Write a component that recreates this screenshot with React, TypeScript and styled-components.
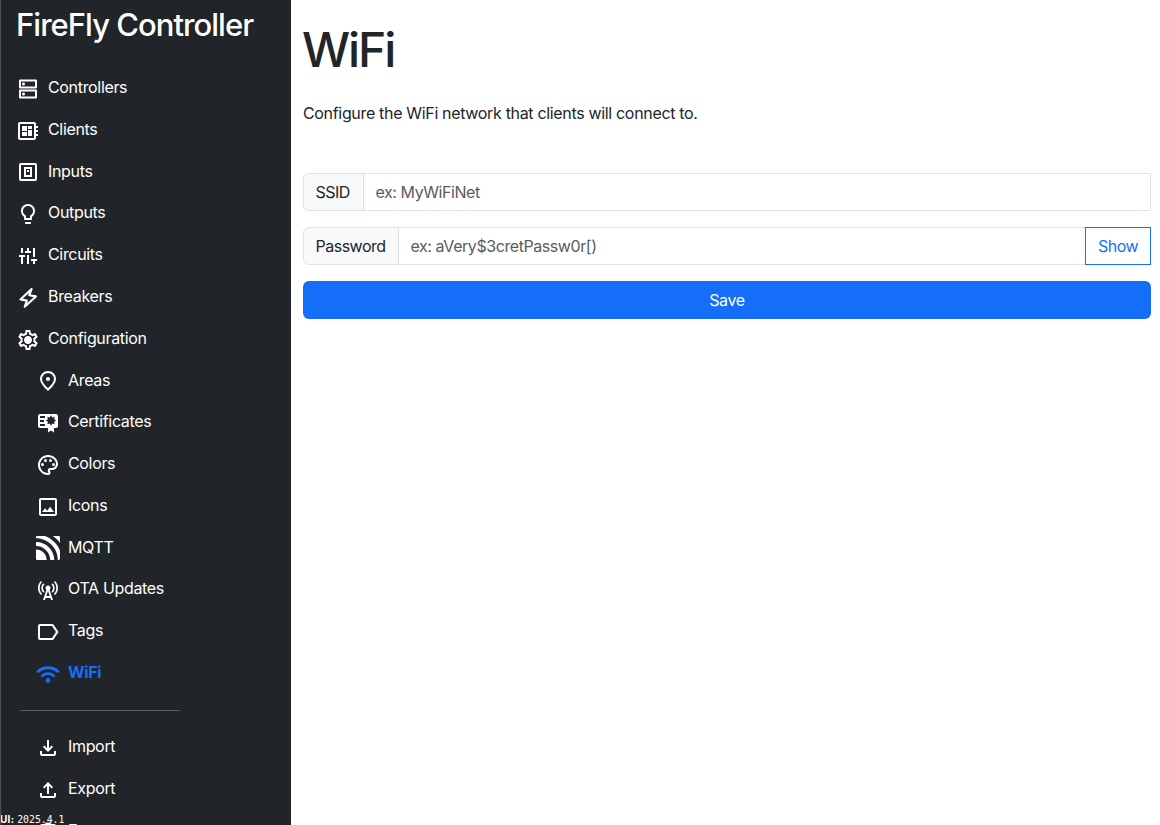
import React, { ReactNode } from "react";
import styled, { createGlobalStyle } from "styled-components";
import {
  MdOutlineDeveloperBoard, MdLightbulbOutline,
  MdOutlinePalette, MdOutlineImage, MdOutlineCellTower,
  MdOutlineFileDownload, MdOutlineFileUpload, MdOutlineSettings,
} from "react-icons/md";
import { SiMqtt } from "react-icons/si";

const Global = createGlobalStyle`
  *, *::before, *::after { box-sizing: border-box; }
  body {
    margin: 0; height: 825px; overflow: hidden; background: #fff; color: #212529;
    font: 400 16px/24px Inter, "Liberation Sans", sans-serif; letter-spacing: -0.33px;
  }
`;
const Page = styled.div`display: flex; height: 825px; overflow: hidden;`;
const Sidebar = styled.nav`
  position: relative; width: 291px; flex: none; overflow: hidden; color: #fff;
  background: #212529; border-left: 1px solid #495057;
`;
const Brand = styled.div`
  margin: 6px 0 0 15px; height: 38px; font-size: 31px; line-height: 38px;
  font-weight: 550; letter-spacing: -0.97px; white-space: nowrap;
`;
const Menu = styled.div`padding: 23.8px 0 0 15px;`;
const Item = styled.a<{ $sub?: boolean; $active?: boolean }>`
  display: flex; align-items: center; height: 41.78px; gap: 8px;
  margin-left: ${p => (p.$sub ? 20 : 0)}px;
  color: ${p => (p.$active ? "#146ef9" : "#fff")};
  font-weight: ${p => (p.$active ? 700 : 400)};
  svg { width: 24px; height: 24px; flex: none; display: block; }
`;
const IconSlot = styled.span`position: relative; display: flex; flex: none; padding-top: 0.5px;`;
const Label = styled.span`padding-bottom: 3px; white-space: nowrap;`;
const Divider = styled.hr`
  width: 160px; height: 1px; margin: 16.2px 0 15.6px 4px; border: 0; background: #5c5f62;
`;
const Version = styled.div`
  position: absolute; left: -1px; bottom: -1px; height: 13px; font-size: 10px; line-height: 13px;
  letter-spacing: 0; white-space: nowrap;
  b { font-weight: 700; letter-spacing: 0.3px; }
  span { font-family: "DejaVu Sans Mono", monospace; font-size: 9.8px; }
`;
const Main = styled.main`flex: 1; padding: 20px 9px 0 12px;`;
const Heading = styled.h1`margin: 0 0 0 -1px; font-size: 48px; line-height: 60px; font-weight: 550; letter-spacing: -2.1px;`;
const Intro = styled.p`margin: 21px 0 48px;`;
const Group = styled.div`display: flex; height: 38px; margin-bottom: 16px; letter-spacing: -0.5px;`;
const Prefix = styled.label<{ $w: number }>`
  width: ${p => p.$w}px; flex: none; padding: 6px 11.5px; background: #f8f9fa;
  border: 1px solid #dee2e6; border-radius: 6px 0 0 6px; white-space: nowrap;
`;
const Field = styled.input`
  flex: 1; min-width: 0; margin-left: -1px; padding: 6px 11.5px; font: inherit; letter-spacing: -0.43px;
  color: #212529; background: #fff; border: 1px solid #dee2e6; border-radius: 0; outline: 0;
  &::placeholder { color: #595c5f; opacity: 1; }
`;
const ShowButton = styled.button`
  width: 66px; margin-left: -1px; padding: 0; font: inherit; letter-spacing: inherit;
  color: #146ef9; background: #fff; border: 1px solid #146ef9;
`;
const SaveButton = styled.button`
  display: block; width: 100%; height: 38px; padding: 0; font: inherit; letter-spacing: inherit;
  color: #fff; background: #146ef9; border: 0; border-radius: 6px;
`;

const Glyph = ({ d }: { d: string }) => (
  <svg viewBox="0 0 24 24" fill="currentColor" fillRule="evenodd"><path d={d} /></svg>
);
const server = "M4 2.5h16a1 1 0 0 1 1 1v7a1 1 0 0 1-1 1H4a1 1 0 0 1-1-1v-7a1 1 0 0 1 1-1zM5 4.5v5h14v-5zM4 12.5h16a1 1 0 0 1 1 1v7a1 1 0 0 1-1 1H4a1 1 0 0 1-1-1v-7a1 1 0 0 1 1-1zM5 14.5v5h14v-5zM7.5 5.5a1.5 1.5 0 1 1 0 3 1.5 1.5 0 0 1 0-3zM7.5 15.5a1.5 1.5 0 1 1 0 3 1.5 1.5 0 0 1 0-3z";
const inputs = "M5 3h14a2 2 0 0 1 2 2v14a2 2 0 0 1-2 2H5a2 2 0 0 1-2-2V5a2 2 0 0 1 2-2zM5 5v14h14V5zM8 7h8v10H8zM10 9v6h4V9zM11 10h2v2h-2z";
const mixer = "M5 20v-7H3v-2h6v2H7v7zM5 9V4h2v5zM9 9V7h2V4h2v3h2v2zM11 20V11h2v9zM17 20v-3h-2v-2h6v2h-2v3zM17 13V4h2v9z";
const pin = "M12 2a8 8 0 0 1 8 8c0 5-8 12-8 12S4 15 4 10a8 8 0 0 1 8-8zM12 4a6 6 0 0 0-6 6c0 3 3.6 7 6 9.3C14.4 17 18 13 18 10a6 6 0 0 0-6-6zM12 8a2 2 0 1 1 0 4 2 2 0 0 1 0-4z";
const certificate = "M4 3h16a2 2 0 0 1 2 2v10a2 2 0 0 1-2 2h-2v4.5l-3-2-3 2V17H4a2 2 0 0 1-2-2V5a2 2 0 0 1 2-2zM4 5v2h5V5zM4 9v2h4V9zM4 13v2h5v-2zM20.2 9.5L18.1 8.2 18.7 5.8 16.3 6.4 15 4.3 13.7 6.4 11.3 5.8 11.9 8.2 9.8 9.5 11.9 10.8 11.3 13.2 13.7 12.6 15 14.7 16.3 12.6 18.7 13.2 18.1 10.8z";
const tag = "M4 4h12a2 2 0 0 1 1.65.85L22.5 12l-4.85 7.15A2 2 0 0 1 16 20H4a2 2 0 0 1-2-2V6a2 2 0 0 1 2-2zM4 6v12h12l4-6-4-6z";
const clipboard = "M10 2.5h4l1.500 1.500H18a2 2 0 0 1 2 2v14a2 2 0 0 1-2 2H6a2 2 0 0 1-2-2V6a2 2 0 0 1 2-2h2.500zM6 6v14h12V6z";

const BoltIcon = () => (
  <svg viewBox="0 0 24 24" fill="none" stroke="currentColor" strokeWidth="2.1" strokeLinejoin="round">
    <path d="M15.6 3L4.4 13.4l6.5 1.2-2.2 6.2L19.9 10.4l-6.7-1.2z" />
  </svg>
);
const GearDot = styled.i`
  position: absolute; left: 9px; top: 9.5px; width: 6px; height: 6px;
  border-radius: 50%; background: currentColor;
`;
const GearIcon = () => <><MdOutlineSettings /><GearDot /></>;
const WifiIcon = () => (
  <svg viewBox="0 0 24 24" fill="none" stroke="currentColor" strokeWidth="2.8">
    <path d="M1.2 10.2a15.3 15.3 0 0 1 21.6 0M5.5 14.4a9.2 9.2 0 0 1 13 0" />
    <circle cx="12" cy="18.4" r="2.4" fill="currentColor" stroke="none" />
  </svg>
);

type Entry = [string, ReactNode];
const primary: Entry[] = [
  ["Controllers", <Glyph d={server} />], ["Clients", <MdOutlineDeveloperBoard />],
  ["Inputs", <Glyph d={inputs} />], ["Outputs", <MdLightbulbOutline />],
  ["Circuits", <Glyph d={mixer} />], ["Breakers", <BoltIcon />],
  ["Configuration", <GearIcon />],
];
const secondary: Entry[] = [
  ["Areas", <Glyph d={pin} />], ["Certificates", <Glyph d={certificate} />],
  ["Colors", <MdOutlinePalette />], ["Icons", <MdOutlineImage />], ["MQTT", <SiMqtt />],
  ["OTA Updates", <MdOutlineCellTower />], ["Tags", <Glyph d={tag} />], ["WiFi", <WifiIcon />],
];
const tools: Entry[] = [
  ["Import", <MdOutlineFileDownload />], ["Export", <MdOutlineFileUpload />],
  ["Events", <Glyph d={clipboard} />],
];
const rows = (entries: Entry[], sub = false) => entries.map(([name, icon]) => (
  <Item key={name} $sub={sub} $active={name === "WiFi"}>
    <IconSlot>{icon}</IconSlot><Label>{name}</Label>
  </Item>
));

export default function App() {
  return (
    <>
      <Global />
      <Page>
        <Sidebar>
          <Brand>FireFly Controller</Brand>
          <Menu>
            {rows(primary)}
            {rows(secondary, true)}
            <Divider />
            {rows(tools, true)}
          </Menu>
          <Version><b>UI:</b> <span>2025.4.1</span></Version>
        </Sidebar>
        <Main>
          <Heading>WiFi</Heading>
          <Intro>Configure the WiFi network that clients will connect to.</Intro>
          <Group><Prefix $w={61}>SSID</Prefix><Field placeholder="ex: MyWiFiNet" /></Group>
          <Group>
            <Prefix $w={96}>Password</Prefix><Field placeholder="ex: aVery$3cretPassw0r[)" />
            <ShowButton>Show</ShowButton>
          </Group>
          <SaveButton>Save</SaveButton>
        </Main>
      </Page>
    </>
  );
}
